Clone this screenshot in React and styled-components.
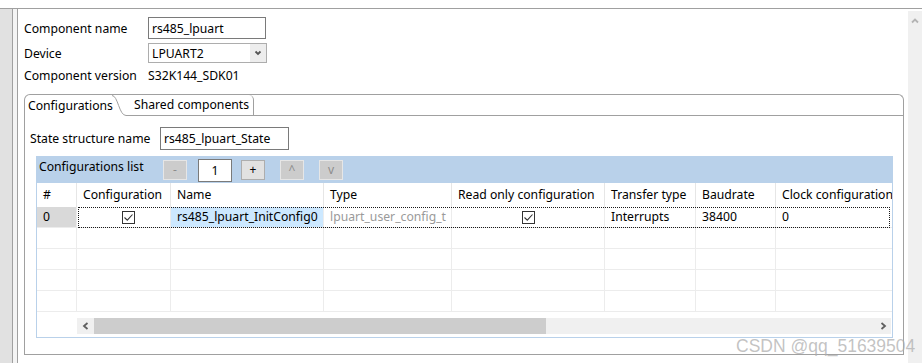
import React from 'react';
import styled, { createGlobalStyle } from 'styled-components';

const GlobalStyle = createGlobalStyle`
  html, body { margin: 0; padding: 0; background: #fff; }
  body {
    font-family: "Noto Sans", "Liberation Sans", sans-serif;
    font-size: 12.2px;
    color: #000;
  }
`;

const Page = styled.div`
  width: 922px;
  height: 363px;
  display: flex;
  flex-direction: column;
  overflow: hidden;
  position: relative;
  background: #fff;
`;

const TopStrip = styled.div`
  height: 8px;
  flex-shrink: 0;
  border-bottom: 1px solid #a0a0a0;
`;

const Main = styled.div`
  flex: 1;
  display: flex;
  min-height: 0;
`;

const Gutter = styled.div`
  width: 12px;
  background: #e1e1e1;
  border-right: 1px solid #a0a0a0;
`;

const Sash = styled.div`
  width: 4px;
  background: #f4f4f4;
  border-right: 1px solid #a0a0a0;
`;

const Content = styled.div`
  flex: 1;
  min-width: 0;
  padding: 8px 4px 0 6px;
`;

const VScroll = styled.div`
  width: 14px;
  margin-top: 2px;
  background: #f0f0f0;
  display: flex;
  justify-content: center;
  align-items: flex-start;
  padding-top: 6px;
  box-sizing: border-box;
`;

/* 상단 폼 */
const FormGrid = styled.div`
  display: grid;
  grid-template-columns: 124px 1fr;
  row-gap: 4px;
  align-items: center;
`;

const FieldLabel = styled.div`
  line-height: 16px;
  padding-top: 1px;
  white-space: nowrap;
`;

const TextField = styled.div`
  width: ${p => p.$w}px;
  height: ${p => p.$h}px;
  box-sizing: border-box;
  border: 1px solid #7a7a7a;
  padding-left: 3px;
  display: flex;
  align-items: center;
  background: #fff;
  white-space: nowrap;
`;

const SelectBox = styled.div`
  width: 119px;
  height: 20px;
  box-sizing: border-box;
  border: 1px solid #adadad;
  display: flex;
  align-items: center;
  background: #fff;
`;

const SelectText = styled.div`
  flex: 1;
  padding-left: 3px;
`;

const SelectArrow = styled.div`
  width: 16px;
  height: 18px;
  background: #ededed;
  display: flex;
  align-items: center;
  justify-content: center;
`;

/* 탭 */
const TabFolder = styled.div`
  margin-top: 10px;
  height: 261px;
  display: flex;
  flex-direction: column;
`;

const TabHeader = styled.div`
  height: 22px;
  box-sizing: border-box;
  display: flex;
  border: 1px solid #a0a0a0;
  border-bottom: none;
  border-radius: 6px 6px 0 0;
  overflow: hidden;
`;

const ActiveTab = styled.div`
  width: 87px;
  padding-left: 3px;
  box-sizing: border-box;
  line-height: 21px;
  white-space: nowrap;
`;

const Slant = styled.svg`
  width: 14px;
  height: 21px;
  flex-shrink: 0;
  display: block;
`;

const Tab = styled.div`
  width: 128px;
  box-sizing: border-box;
  padding-left: 8px;
  line-height: 20px;
  border-bottom: 1px solid #a0a0a0;
  border-right: 1px solid #a0a0a0;
  border-top-right-radius: 5px;
  white-space: nowrap;
`;

const TabFill = styled.div`
  flex: 1;
  border-bottom: 1px solid #a0a0a0;
`;

const TabBody = styled.div`
  flex: 1;
  border: 1px solid #a0a0a0;
  border-top: none;
  padding: 11px 0 0 5px;
  display: flex;
  flex-direction: column;
`;

const StateRow = styled.div`
  display: flex;
  align-items: center;
`;

const StateLabel = styled.div`
  width: 130px;
  white-space: nowrap;
`;

/* 구성 목록 */
const ListGroup = styled.div`
  margin: 6px 10px 0 6px;
  height: 182px;
  box-sizing: border-box;
  border: 1px solid #b9d1ea;
  display: flex;
  flex-direction: column;
  background: #fff;
  overflow: hidden;
`;

const ListBar = styled.div`
  height: 26px;
  flex-shrink: 0;
  background: #b9d1ea;
  display: flex;
  align-items: center;
  padding-left: 2px;
`;

const BarLabel = styled.div`
  width: 124px;
  align-self: flex-start;
  padding-top: 1px;
  line-height: 17px;
  white-space: nowrap;
`;

const BarButton = styled.div`
  width: 24px;
  height: 20px;
  box-sizing: border-box;
  margin-left: ${p => p.$ml || 0}px;
  display: flex;
  align-items: center;
  justify-content: center;
  background: ${p => (p.$disabled ? '#cccccc' : '#e1e1e1')};
  border: 1px solid ${p => (p.$disabled ? '#e6e6e6' : '#adadad')};
  color: ${p => (p.$disabled ? '#8c8c8c' : '#000')};
  font-size: 12px;
  line-height: 1;
`;

const Spinner = styled.div`
  width: 34px;
  height: 23px;
  box-sizing: border-box;
  margin-left: 11px;
  border: 1px solid #7a7a7a;
  background: #fff;
  display: flex;
  align-items: center;
  justify-content: center;
`;

const COLS = '40px 94px 153px 128px 153px 91px 80px 118px';

const HeadRow = styled.div`
  display: grid;
  grid-template-columns: ${COLS};
  height: 24px;
  flex-shrink: 0;
`;

const HeadCell = styled.div`
  padding-left: 6px;
  line-height: 24px;
  border-right: 1px solid #e6e6e6;
  white-space: nowrap;
  overflow: hidden;
`;

const Row = styled.div`
  display: grid;
  grid-template-columns: ${COLS};
  height: 21px;
  flex-shrink: 0;
  box-sizing: border-box;
  border-bottom: 1px solid #ececec;
  position: relative;

  ${p => p.$focused && `
    &::after {
      content: '';
      position: absolute;
      left: 41px;
      right: 2px;
      top: 0;
      bottom: -1px;
      border: 1px dotted #1a1a1a;
      pointer-events: none;
    }
  `}
`;

const Cell = styled.div`
  padding-left: 6px;
  line-height: 20px;
  border-right: 1px solid #ececec;
  white-space: nowrap;
  overflow: hidden;
  background: ${p => p.$bg || 'transparent'};
  color: ${p => p.$muted ? '#9a9a9a' : '#000'};
  display: ${p => p.$center ? 'flex' : 'block'};
  justify-content: center;
  align-items: center;
  ${p => p.$center && 'padding-left: 0;'}
  ${p => p.$shift && `padding-left: ${p.$shift}px;`}
`;

const CheckBox = styled.div`
  width: 13px;
  height: 13px;
  box-sizing: border-box;
  border: 1px solid #333;
  background: #fff;
  display: flex;
  align-items: center;
  justify-content: center;
`;

const ScrollArea = styled.div`
  flex: 1;
  padding: 6px 1px 0 40px;
`;

const HScroll = styled.div`
  height: 16px;
  background: #f0f0f0;
  display: flex;
  align-items: stretch;
`;

const ScrollBtn = styled.div`
  width: 17px;
  display: flex;
  align-items: center;
  justify-content: center;
`;

const Thumb = styled.div`
  width: 452px;
  background: #cdcdcd;
`;

const Track = styled.div`
  flex: 1;
`;

const Watermark = styled.div`
  position: absolute;
  left: 736px;
  top: 335px;
  font-family: "Liberation Sans", Arial, sans-serif;
  font-size: 17.5px;
  line-height: 22px;
  color: rgba(175, 175, 175, 0.75);
  white-space: nowrap;
  pointer-events: none;
`;

const Check = () => (
  <CheckBox>
    <svg width="11" height="11" viewBox="0 0 11 11">
      <path d="M1.5 5.5 L4.3 8.2 L9.5 2.5" fill="none" stroke="#333" strokeWidth="1.1" />
    </svg>
  </CheckBox>
);

const Chevron = ({ dir, color, size = 8 }) => {
  const paths = {
    left: 'M5.5 1 L2 4 L5.5 7',
    right: 'M2.5 1 L6 4 L2.5 7',
    up: 'M1 5.5 L4 2.5 L7 5.5',
    down: 'M1.5 2.5 L4 5 L6.5 2.5',
  };
  return (
    <svg width={size} height={size} viewBox="0 0 8 8">
      <path d={paths[dir]} fill="none" stroke={color} strokeWidth="1.8" />
    </svg>
  );
};

const EmptyRow = () => (
  <Row>
    {Array.from({ length: 8 }).map((_, i) => <Cell key={i} />)}
  </Row>
);

const App = () => {
  return (
    <>
      <GlobalStyle />
      <Page>
        <TopStrip />
        <Main>
          <Gutter />
          <Sash />
          <Content>
            <FormGrid>
              <FieldLabel>Component name</FieldLabel>
              <TextField $w={118} $h={22}>rs485_lpuart</TextField>
              <FieldLabel>Device</FieldLabel>
              <SelectBox>
                <SelectText>LPUART2</SelectText>
                <SelectArrow><Chevron dir="down" color="#555" /></SelectArrow>
              </SelectBox>
              <FieldLabel>Component version</FieldLabel>
              <FieldLabel>S32K144_SDK01</FieldLabel>
            </FormGrid>

            <TabFolder>
              <TabHeader>
                <ActiveTab>Configurations</ActiveTab>
                <Slant viewBox="0 0 14 21">
                  <path d="M0 0.5 C 6 0.5, 7 20.5, 14 20.5" fill="none" stroke="#a0a0a0" />
                </Slant>
                <Tab>Shared components</Tab>
                <TabFill />
              </TabHeader>
              <TabBody>
                <StateRow>
                  <StateLabel>State structure name</StateLabel>
                  <TextField $w={129} $h={23}>rs485_lpuart_State</TextField>
                </StateRow>

                <ListGroup>
                  <ListBar>
                    <BarLabel>Configurations list</BarLabel>
                    <BarButton $disabled>-</BarButton>
                    <Spinner>1</Spinner>
                    <BarButton $ml={9}>+</BarButton>
                    <BarButton $ml={15} $disabled>^</BarButton>
                    <BarButton $ml={15} $disabled>v</BarButton>
                  </ListBar>

                  <HeadRow>
                    <HeadCell>#</HeadCell>
                    <HeadCell>Configuration</HeadCell>
                    <HeadCell>Name</HeadCell>
                    <HeadCell>Type</HeadCell>
                    <HeadCell>Read only configuration</HeadCell>
                    <HeadCell>Transfer type</HeadCell>
                    <HeadCell>Baudrate</HeadCell>
                    <HeadCell>Clock configuration</HeadCell>
                  </HeadRow>

                  <Row $focused>
                    <Cell $bg="#d9d9d9">0</Cell>
                    <Cell $center $shift={9}><Check /></Cell>
                    <Cell $bg="#cce8ff">rs485_lpuart_InitConfig0</Cell>
                    <Cell $muted>lpuart_user_config_t</Cell>
                    <Cell $center><Check /></Cell>
                    <Cell>Interrupts</Cell>
                    <Cell>38400</Cell>
                    <Cell>0</Cell>
                  </Row>
                  <EmptyRow />
                  <EmptyRow />
                  <EmptyRow />
                  <EmptyRow />

                  <ScrollArea>
                    <HScroll>
                      <ScrollBtn><Chevron dir="left" color="#606060" /></ScrollBtn>
                      <Thumb />
                      <Track />
                      <ScrollBtn><Chevron dir="right" color="#606060" /></ScrollBtn>
                    </HScroll>
                  </ScrollArea>
                </ListGroup>
              </TabBody>
            </TabFolder>
          </Content>
          <VScroll>
            <Chevron dir="up" color="#b4b4b4" />
          </VScroll>
        </Main>
        <Watermark>CSDN @qq_51639504</Watermark>
      </Page>
    </>
  );
};

export default App;
